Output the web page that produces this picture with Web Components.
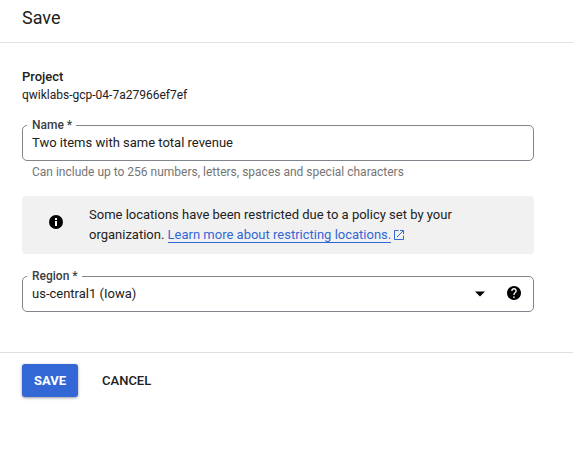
<!DOCTYPE html>
<html lang="en">
<head>
<meta charset="utf-8">
<title>Save</title>
<style>
body { margin: 0; background: #fff; color: #212121; font: 13px/20px Roboto, sans-serif; }
</style>
</head>
<body>
<save-panel></save-panel>
<script>
const define = (name, html) => customElements.define(name, class extends HTMLElement {
  constructor() {
    super();
    const t = document.createElement('template');
    t.innerHTML = html;
    this.attachShadow({ mode: 'open' }).append(t.content.cloneNode(true));
  }
});

define('project-info', `
<style>
:host { display: block; }
.title { font-weight: 500; line-height: 18px; }
.id { font-size: 12px; line-height: 18px; }
</style>
<div class="title">Project</div>
<div class="id"><slot></slot></div>`);

define('outlined-field', `
<style>
:host { display: block; }
fieldset { margin: 0; padding: 0 9px; border: 1px solid #80868b; border-radius: 5px; height: 43px; box-sizing: border-box; min-width: 0; display: block; }
legend { font-size: 12px; font-weight: 500; line-height: 14px; height: 14px; padding: 0 4px 0 5px; margin-left: -5px; color: #3c4043; }
.row { display: flex; align-items: center; height: 20px; padding-top: 1px; }
.value { flex: 1; }
</style>
<fieldset><legend><slot name="label"></slot></legend>
<div class="row"><span class="value"><slot></slot></span><slot name="icons"></slot></div></fieldset>
<slot name="hint"></slot>`);

define('field-hint', `
<style>:host { display: block; font-size: 12px; line-height: 16px; color: #757575; padding: 3px 10px 0; }</style>
<slot></slot>`);

define('select-icons', `
<style>
:host { display: flex; align-items: center; gap: 22px; padding-right: 3px; }
svg { display: block; }
.help { margin-top: -2px; }
</style>
<svg width="10" height="6" viewBox="0 0 10 6"><path d="M0 .5h10L5 5.5z"/></svg>
<svg class="help" width="14" height="14" viewBox="2 2 20 20"><path d="M12 2C6.480 2 2 6.480 2 12s4.480 10 10 10 10-4.480 10-10S17.520 2 12 2zm1 17h-2v-2h2v2zm2.070-7.750l-.9.920C13.450 12.900 13 13.500 13 15h-2v-.5c0-1.100.45-2.100 1.170-2.830l1.240-1.260c.37-.36.59-.86.59-1.410 0-1.100-.9-2-2-2s-2 .9-2 2H8c0-2.210 1.790-4 4-4s4 1.790 4 4c0 .88-.36 1.680-.93 2.250z" stroke="#000" stroke-width="0"/></svg>`);

define('info-notice', `
<style>
:host { display: flex; align-items: center; box-sizing: border-box; height: 58px; padding-left: 27px; background: #f1f1f1; border-radius: 4px; }
svg { display: block; flex: none; margin-top: -6px; }
.text { margin-left: 26px; width: 400px; }
</style>
<svg width="14" height="14" viewBox="0 0 14 14"><circle cx="7" cy="7" r="7"/><path fill="#fff" d="M6 3h2v2H6zM6 6h2v5H6z"/></svg>
<div class="text"><slot></slot></div>`);

define('external-link', `
<style>
:host { color: #3367d6; white-space: nowrap; }
span { border-bottom: 1px solid #3367d6; }
svg { width: 10px; height: 10px; margin-left: 3px; vertical-align: -1px; }
</style>
<span><slot></slot></span><svg viewBox="0 0 10 10" fill="none" stroke="currentColor"><path d="M4.500.5h-4v9h9v-4M6 .5h3.500v3.500M3 7L9.300.7"/></svg>`);

define('action-button', `
<style>
:host { display: block; font-weight: 500; line-height: 33px; height: 33px; padding: 0 12px; border-radius: 3px; color: #212121; }
:host([primary]) { background: #3367d6; color: #fff; font-weight: 700; box-shadow: 0 1px 3px rgba(0,0,0,.4); }
</style>
<slot></slot>`);

define('save-panel', `
<style>
:host { display: flex; flex-direction: column; height: 453px; box-sizing: border-box; }
header { height: 42px; border-bottom: 1px solid #e0e0e0; padding-left: 22px; font-size: 18px; line-height: 36px; }
main { box-sizing: border-box; height: 309px; padding: 25px 39px 0 22px; display: flex; flex-direction: column; }
.name { margin-top: 14px; height: 61px; }
.notice { margin-top: 17px; }
.region { margin-top: 15px; }
footer { border-top: 1px solid #e0e0e0; padding: 11px 22px 0; display: flex; gap: 12px; }
</style>
<header>Save</header>
<main>
<project-info>qwiklabs-gcp-04-7a27966ef7ef</project-info>
<outlined-field class="name"><span slot="label">Name *</span>Two items with same total revenue<field-hint slot="hint">Can include up to 256 numbers, letters, spaces and special characters</field-hint></outlined-field>
<info-notice class="notice">Some locations have been restricted due to a policy set by your<br>organization. <external-link>Learn more about restricting locations.</external-link></info-notice>
<outlined-field class="region"><span slot="label">Region *</span>us-central1 (Iowa)<select-icons slot="icons"></select-icons></outlined-field>
</main>
<footer><action-button primary>SAVE</action-button><action-button>CANCEL</action-button></footer>`);
</script>
</body>
</html>
